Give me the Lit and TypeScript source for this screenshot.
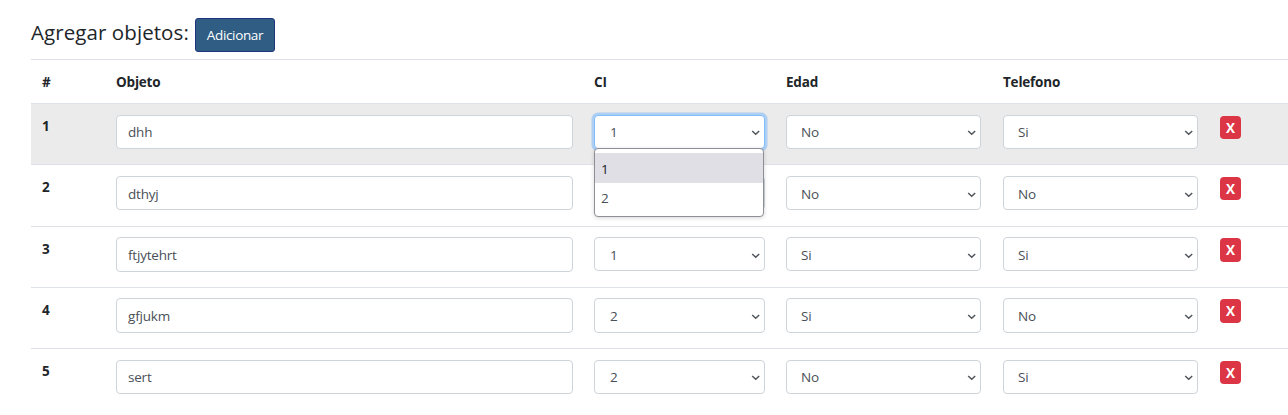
import { LitElement, html, css, svg } from "lit";
import { customElement, property } from "lit/decorators.js";
import { classMap } from "lit/directives/class-map.js";

const chevron = html`<svg class="chevron" width="9" height="6" viewBox="0 0 9 6" fill="none">
  ${svg`<path d="M1.2 1 L4.7 4.3 L8.2 1" stroke="#50565c" stroke-width="1.5"/>`}
</svg>`;

@customElement("select-field")
class SelectField extends LitElement {
  @property() value = "";
  @property({ type: Boolean }) open = false;
  @property({ type: Array }) options: string[] = [];

  static styles = css`
    :host { display: block; position: relative; height: 100%; }
    .control {
      box-sizing: border-box; height: 100%;
      display: flex; justify-content: space-between;
      border: 1px solid #ced4da; border-radius: 4px; background: #fff;
      padding: var(--text-top, 7px) 4px 0 var(--text-left, 14px);
      color: #495057; line-height: 20px;
    }
    .control.open { border-color: #80bdff; box-shadow: 0 0 0 2.5px #aecef2; }
    .chevron { margin-top: 8px; flex: none; }
    .menu {
      position: absolute; z-index: 2; left: 0; right: 1px; top: 33px;
      box-sizing: border-box; height: 69px; padding-top: 4px;
      background: #fff; border: 1px solid #8f8f96; border-radius: 4px;
      box-shadow: 0 1px 4px rgba(0, 0, 0, 0.16);
      color: #495057;
    }
    .option { height: 29px; line-height: 28px; padding: 1px 0 0 6px; box-sizing: border-box; }
    .option.active { height: 30px; line-height: 30px; background: #e0dfe6; color: #1a1a22; }
  `;

  render() {
    return html`
      <div class=${classMap({ control: true, open: this.open })}>
        <span>${this.value}</span>${chevron}
      </div>
      ${this.open
        ? html`<div class="menu">
            ${this.options.map(
              (o) => html`<div class=${classMap({ option: true, active: o === this.value })}>${o}</div>`
            )}
          </div>`
        : ""}
    `;
  }
}

const rows = [
  { name: "dhh", ci: "1", edad: "No", tel: "Si" },
  { name: "dthyj", ci: "2", edad: "No", tel: "No" },
  { name: "ftjytehrt", ci: "1", edad: "Si", tel: "Si" },
  { name: "gfjukm", ci: "2", edad: "Si", tel: "No" },
  { name: "sert", ci: "2", edad: "No", tel: "Si" },
];

@customElement("app-root")
class AppRoot extends LitElement {
  static styles = css`
    :host {
      display: block; box-sizing: border-box; height: 415px; overflow: hidden;
      padding: 18px 0 0 31px; background: #fff; color: #212529;
      font-family: "Open Sans", "Noto Sans", sans-serif; font-size: 13.5px;
      letter-spacing: -0.2px;
    }
    .title { display: flex; height: 41px; }
    h1 {
      margin: 0; width: 164px; font-size: 20.5px; font-weight: 400; line-height: 28px;
      white-space: nowrap; letter-spacing: 0.08px;
    }
    .add {
      box-sizing: border-box; width: 80px; height: 34px; padding: 0;
      border: 1px solid #1f3480; border-radius: 3px; background: #2f5d83; color: #fff;
      font: inherit; letter-spacing: -0.35px; line-height: 32px; text-align: center;
    }
    .row {
      --text-top: 6px;
      display: grid; grid-template-columns: 74px 478px 192px 217px 217px 21px;
      grid-template-rows: 34px;
      box-sizing: border-box; height: 61px;
      border-top: 1px solid #dee2e6; padding: 11px 0 0 11px;
    }
    .cell { padding-right: 21px; }
    .ci { --text-left: 15px; }
    .wide { padding-right: 22px; }
    .head { height: 44px; font-weight: 700; line-height: 22px; }
    .first { background: #ebebeb; }
    .r2 { height: 62px; --text-top: 7px; }
    .r3 { padding-top: 10px; --text-top: 7px; }
    .r4 { padding-top: 10px; --text-top: 7px; grid-template-rows: 35px; }
    .num { font-weight: 700; line-height: 20px; height: 20px; margin-top: 1px; }
    .r3 .num, .r4 .num { margin-top: 2px; }
    .input {
      box-sizing: border-box; height: 100%; border: 1px solid #ced4da; border-radius: 4px;
      background: #fff; color: #495057; line-height: 20px; padding: var(--text-top) 11px 0;
    }
    .r3 .input { height: 35px; }
    .del {
      margin-top: 1px; height: 23px; border-radius: 4px; background: #dc3545; color: #fff;
      font-weight: 700; line-height: 25px; text-align: center;
    }
    .r3 .del, .r4 .del { height: 24px; }
  `;

  render() {
    return html`
      <div class="title"><h1>Agregar objetos:</h1><button class="add">Adicionar</button></div>
      <div class="row head">
        <span>#</span><span>Objeto</span><span>CI</span><span>Edad</span><span>Telefono</span>
      </div>
      ${rows.map(
        (r, i) => html`<div class=${classMap({ row: true, first: i === 0, [`r${i + 1}`]: true })}>
          <div class="num">${i + 1}</div>
          <div class="cell"><div class="input">${r.name}</div></div>
          <div class="cell ci"><select-field .value=${r.ci} .options=${["1", "2"]} .open=${i === 0}></select-field></div>
          <div class="cell wide"><select-field .value=${r.edad}></select-field></div>
          <div class="cell wide"><select-field .value=${r.tel}></select-field></div>
          <div class="del">X</div>
        </div>`
      )}
    `;
  }
}
